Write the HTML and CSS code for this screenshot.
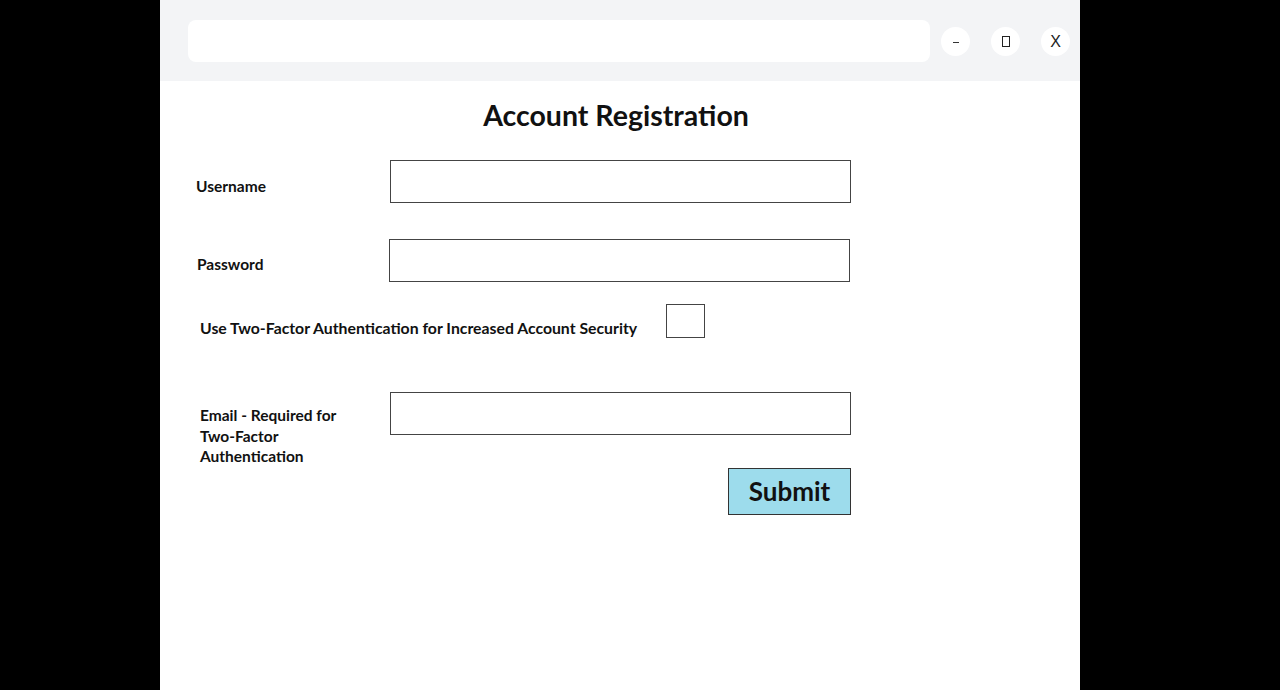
FILE: index.html
```html
<!DOCTYPE html>
<html>
<head>
<meta charset="utf-8">
<link rel="stylesheet" href="styles.css">
</head>
<body>
<div class="window">
  <div class="titlebar">
    <div class="address"></div>
    <div class="controls">
      <span class="ctl"><span class="dash"></span></span>
      <span class="ctl"><span class="sq"></span></span>
      <span class="ctl x">X</span>
    </div>
  </div>
  <div class="content">
    <h1 class="title">Account Registration</h1>
    <div class="row row-user">
      <label class="lbl">Username</label>
      <div class="field"></div>
    </div>
    <div class="row row-pass">
      <label class="lbl">Password</label>
      <div class="field"></div>
    </div>
    <div class="row row-check">
      <label class="lbl-wide">Use Two-Factor Authentication for Increased Account Security</label>
      <div class="check"></div>
    </div>
    <div class="row row-email">
      <label class="lbl lbl-email">Email - Required for<br>Two-Factor<br>Authentication</label>
      <div class="field"></div>
    </div>
    <div class="actions">
      <button class="submit">Submit</button>
    </div>
  </div>
</div>
</body>
</html>
```
FILE: styles.css
```css
html, body {
  margin: 0;
  padding: 0;
  background: #000;
  height: 100%;
  overflow: hidden;
}
body {
  font-family: Lato, "Open Sans", sans-serif;
  color: #111;
}
.window {
  width: 920px;
  height: 690px;
  margin-left: 160px;
  background: #fff;
}
.titlebar {
  height: 81px;
  background: #f3f4f6;
  display: flex;
  align-items: flex-start;
  padding: 20px 0 0 28px;
  box-sizing: border-box;
}
.address {
  width: 742px;
  height: 42px;
  background: #fff;
  border-radius: 8px;
}
.controls {
  display: flex;
  gap: 21px;
  margin-left: 11px;
  margin-top: 7px;
}
.ctl {
  width: 29px;
  height: 29px;
  border-radius: 50%;
  background: #fff;
  display: flex;
  align-items: center;
  justify-content: center;
  font-size: 11px;
  color: #222;
}
.dash {
  width: 6px;
  height: 1px;
  background: #333;
  margin-top: 2px;
}
.ctl.x {
  font-family: "Liberation Sans", sans-serif;
  font-size: 16px;
}
.sq {
  width: 6px;
  height: 9px;
  border: 1px solid #222;
}
.content {
  padding: 14px 0 0 36px;
}
.title {
  margin: 0;
  width: 840px;
  text-align: center;
  font-size: 28.5px;
  font-weight: 700;
  height: 40px;
  line-height: 40px;
}
.row {
  display: flex;
  align-items: center;
}
.lbl {
  width: 194px;
  font-size: 15.5px;
  font-weight: 700;
}
.field {
  box-sizing: border-box;
  width: 461px;
  height: 43px;
  border: 1.5px solid #444;
}
.row-user { margin-top: 25px; }
.row-user .lbl { padding-top: 9px; }
.row-pass { margin-top: 36px; margin-left: 1px; }
.row-pass .lbl { width: 192px; padding-top: 7px; }
.row-check { margin-top: 22px; margin-left: 4px; }
.lbl-wide {
  width: 466px;
  font-size: 15.8px;
  font-weight: 700;
  padding-top: 12px;
}
.check {
  box-sizing: border-box;
  width: 39px;
  height: 34px;
  border: 1.5px solid #444;
}
.row-email {
  margin-top: 54px;
  margin-left: 4px;
  align-items: flex-start;
}
.lbl-email {
  width: 190px;
  line-height: 20.5px;
  padding-top: 13px;
}
.actions {
  width: 655px;
  display: flex;
  justify-content: flex-end;
  margin-top: 1px;
}
.submit {
  width: 123px;
  height: 47px;
  background: #9ddcec;
  border: 1px solid #333;
  font-family: inherit;
  font-size: 26px;
  font-weight: 700;
  color: #111;
  padding: 0;
}
```
